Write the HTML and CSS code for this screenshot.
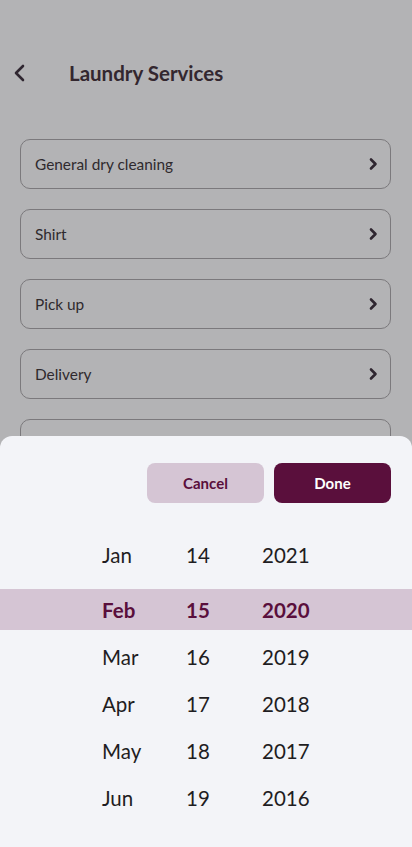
FILE: index.html
```html
<!DOCTYPE html>
<html>
<head>
<meta charset="utf-8">
<link rel="stylesheet" href="styles.css">
</head>
<body>
<div class="screen">
  <header class="header">
    <svg class="back" width="14" height="18" viewBox="0 0 14 18"><path d="M10 2 L3 9 L10 16" fill="none" stroke="#2f2630" stroke-width="2.6" stroke-linecap="round" stroke-linejoin="round"/></svg>
    <h1 class="title">Laundry Services</h1>
  </header>
  <div class="list">
    <div class="card"><span>General dry cleaning</span><svg class="chev" width="10" height="14" viewBox="0 0 10 14"><path d="M3 2.5 L7.5 7 L3 11.5" fill="none" stroke="#2f2630" stroke-width="2.6" stroke-linecap="round" stroke-linejoin="round"/></svg></div>
    <div class="card"><span>Shirt</span><svg class="chev" width="10" height="14" viewBox="0 0 10 14"><path d="M3 2.5 L7.5 7 L3 11.5" fill="none" stroke="#2f2630" stroke-width="2.6" stroke-linecap="round" stroke-linejoin="round"/></svg></div>
    <div class="card"><span>Pick up</span><svg class="chev" width="10" height="14" viewBox="0 0 10 14"><path d="M3 2.5 L7.5 7 L3 11.5" fill="none" stroke="#2f2630" stroke-width="2.6" stroke-linecap="round" stroke-linejoin="round"/></svg></div>
    <div class="card"><span>Delivery</span><svg class="chev" width="10" height="14" viewBox="0 0 10 14"><path d="M3 2.5 L7.5 7 L3 11.5" fill="none" stroke="#2f2630" stroke-width="2.6" stroke-linecap="round" stroke-linejoin="round"/></svg></div>
    <div class="card"><span>Ironing</span><svg class="chev" width="10" height="14" viewBox="0 0 10 14"><path d="M3 2.5 L7.5 7 L3 11.5" fill="none" stroke="#2f2630" stroke-width="2.6" stroke-linecap="round" stroke-linejoin="round"/></svg></div>
  </div>

  <div class="sheet">
    <div class="actions">
      <button class="btn cancel">Cancel</button>
      <button class="btn done">Done</button>
    </div>
    <div class="picker">
      <div class="row first"><span>Jan</span><span>14</span><span>2021</span></div>
      <div class="row selected"><span>Feb</span><span>15</span><span>2020</span></div>
      <div class="row after"><span>Mar</span><span>16</span><span>2019</span></div>
      <div class="row"><span>Apr</span><span>17</span><span>2018</span></div>
      <div class="row"><span>May</span><span>18</span><span>2017</span></div>
      <div class="row"><span>Jun</span><span>19</span><span>2016</span></div>
    </div>
  </div>
</div>
</body>
</html>
```

FILE: styles.css
```css
* { box-sizing: border-box; }
html, body { margin: 0; padding: 0; }
body {
  width: 412px;
  height: 847px;
  overflow: hidden;
  background: #b3b3b5;
  font-family: "Lato", "Noto Sans", sans-serif;
  color: #2f2630;
}
.screen {
  position: relative;
  width: 412px;
  height: 847px;
  padding-top: 53px;
}
.header {
  display: flex;
  align-items: center;
  height: 40px;
  padding-left: 13px;
}
.back { flex: none; }
.title {
  margin: 0 0 0 42px;
  font-size: 20.5px;
  font-weight: 700;
  color: #33272f;
}
.list {
  display: flex;
  flex-direction: column;
  gap: 20px;
  margin-top: 46px;
  padding: 0 21px 0 20px;
}
.card {
  display: flex;
  align-items: center;
  justify-content: space-between;
  height: 50px;
  border: 1px solid #7b797c;
  border-radius: 10px;
  padding: 0 12px 0 14px;
  font-size: 15.4px;
  color: #2f2a2e;
}
.chev { flex: none; }
.sheet {
  position: absolute;
  left: 0;
  right: 0;
  top: 436px;
  bottom: 0;
  background: #f3f4f8;
  border-radius: 12px 12px 0 0;
  padding-top: 27px;
}
.actions {
  display: flex;
  justify-content: flex-end;
  gap: 10px;
  padding-right: 21px;
}
.btn {
  width: 117px;
  height: 40px;
  border: none;
  border-radius: 8px;
  font-family: "Lato", sans-serif;
  font-size: 15px;
  font-weight: 700;
}
.cancel { background: #d5c5d4; color: #5a0f3c; }
.done { background: #5a0f3c; color: #ffffff; }
.picker {
  margin-top: 28px;
}
.row {
  display: grid;
  grid-template-columns: 84px 76px 1fr;
  align-items: center;
  height: 47px;
  padding-left: 102px;
  font-size: 20.5px;
  color: #1f1d22;
}
.row.first { height: 48px; margin-bottom: 10px; }
.row.selected {
  height: 41px;
  background: #d5c5d4;
  color: #5a0f3c;
  font-weight: 700;
}
.row.after { margin-top: 3px; }
```
